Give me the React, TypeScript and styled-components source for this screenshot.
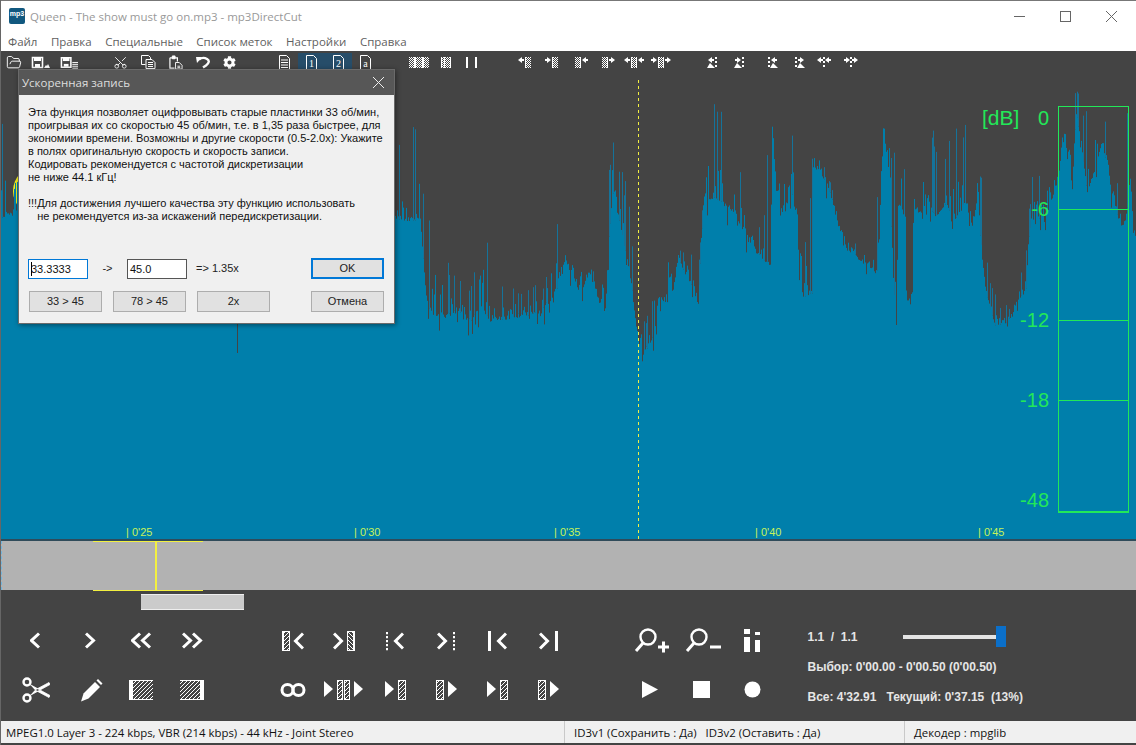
import { ReactNode } from "react";
import styled, { createGlobalStyle } from "styled-components";
import { FaCog } from "react-icons/fa";
import { FolderOpen, Scissors } from "lucide-react";

const GlobalStyle = createGlobalStyle`
  html, body { margin: 0; padding: 0; background: #444; }
  #root { width: 1136px; height: 745px; overflow: hidden; }
`;

type Pt = [number, number];

const bodyEnv: Pt[] = [
  [0, 215], [18, 205], [19, 300], [394, 300], [395, 215], [410, 216], [420, 216], [426, 295], [430, 310], [445, 313],
  [460, 308], [470, 318], [480, 305], [490, 317], [520, 313], [540, 310], [550, 297], [560, 280], [565, 257],
  [570, 270], [580, 290], [590, 270], [600, 305], [605, 308], [608, 250], [612, 190], [620, 220], [625, 250],
  [630, 270], [637, 335], [643, 350], [650, 340], [655, 325], [658, 295], [668, 298], [672, 290], [678, 255],
  [690, 280], [698, 300], [703, 205], [712, 195], [722, 200], [735, 210], [745, 235], [750, 240], [757, 250],
  [765, 260], [770, 260], [772, 140], [780, 215], [786, 205], [792, 190], [796, 215], [799, 260], [802, 295],
  [812, 290], [813, 165], [820, 165], [826, 185], [832, 195], [838, 225], [845, 247], [850, 248], [860, 258],
  [870, 265], [878, 268], [880, 210], [883, 125], [886, 150], [890, 175], [892, 275], [896, 312], [898, 200],
  [905, 215], [906, 300], [912, 290], [913, 208], [922, 208], [928, 195], [935, 215], [945, 200], [955, 215],
  [965, 200], [972, 225], [978, 190], [980, 235], [985, 285], [990, 305], [995, 325], [1003, 322], [1012, 316],
  [1016, 298], [1026, 288], [1028, 240], [1031, 215], [1040, 215], [1048, 205], [1058, 180], [1063, 125],
  [1068, 155], [1072, 185], [1076, 110], [1080, 135], [1087, 190], [1095, 165], [1102, 140], [1108, 175],
  [1115, 205], [1122, 225], [1126, 215], [1130, 170], [1133, 230], [1136, 235],
];

const peakEnv: Pt[] = [
  [0, 85], [18, 85], [19, 300], [394, 300], [395, 120], [403, 115], [417, 90], [422, 150], [426, 175], [430, 210],
  [438, 175], [443, 215], [450, 265], [470, 285], [484, 173], [490, 270], [510, 285], [530, 285], [545, 280],
  [556, 190], [562, 250], [580, 238], [590, 258], [600, 295], [604, 165], [608, 128], [613, 130], [620, 170],
  [628, 160], [631, 230], [634, 215], [640, 300], [650, 320], [655, 230], [658, 178], [668, 180], [675, 245],
  [685, 245], [698, 262], [702, 205], [705, 95], [713, 82], [722, 95], [728, 145], [740, 150], [750, 220],
  [755, 205], [762, 240], [770, 82], [777, 135], [785, 120], [793, 125], [797, 160], [805, 215], [812, 125],
  [822, 160], [830, 180], [840, 215], [855, 240], [866, 240], [880, 150], [883, 82], [886, 82], [892, 120],
  [898, 82], [905, 160], [912, 195], [925, 100], [928, 98], [935, 140], [945, 135], [955, 125], [962, 110],
  [972, 150], [980, 160], [985, 240], [990, 280], [1000, 305], [1012, 305], [1020, 270], [1026, 240], [1032, 170],
  [1040, 165], [1048, 150], [1056, 145], [1061, 100], [1068, 130], [1072, 85], [1082, 90], [1090, 85], [1098, 85],
  [1105, 120], [1112, 180], [1120, 165], [1128, 82], [1133, 210], [1136, 230],
];

const lerp = (env: Pt[], x: number) => {
  for (let i = 1; i < env.length; i++) {
    if (x <= env[i][0]) {
      const [x0, y0] = env[i - 1];
      const [x1, y1] = env[i];
      return y0 + ((y1 - y0) * (x - x0)) / (x1 - x0 || 1);
    }
  }
  return env[env.length - 1][1];
};

let seed = 7;
const rnd = () => {
  seed = (seed * 16807) % 2147483647;
  return seed / 2147483647;
};

// body columns are jagged, about one column in seven carries a thin spike up to the peak line
const buildWave = () => {
  let body = "";
  let spikes = "";
  for (let x = 0; x < 1136; x++) {
    const b = lerp(bodyEnv, x);
    const p = lerp(peakEnv, x);
    const r = rnd();
    let top = b + rnd() * 5;
    if (r < 0.3) top = b - (b - p) * rnd() * 0.35;
    if (r > 0.9) top = b + rnd() * 22;
    if (x === 237) top = 353;
    body += `M${x + 0.5} ${top.toFixed(1)}V540`;
    if (r > 0.3 && r < 0.44 && x !== 237) {
      const y = p + (b - p) * rnd() * 0.4;
      spikes += `M${x + 0.5} ${y.toFixed(1)}V${top.toFixed(1)}`;
    }
  }
  return { body, spikes };
};

const wave = buildWave();

const Window = styled.div`
  width: 1136px;
  height: 745px;
  display: flex;
  flex-direction: column;
  position: relative;
  background: #444;
  border-left: 1px solid #666;
  box-sizing: border-box;
  overflow: hidden;
`;

const TitleBar = styled.div`
  height: 31px;
  flex: none;
  background: #fff;
  display: flex;
  align-items: center;
  padding: 0 2px 0 8px;
  box-sizing: border-box;
  border-top: 1px solid #777;
  font: 11.5px "Open Sans", "Noto Sans", sans-serif;
  color: #999;
`;

const AppIcon = styled.div`
  width: 16px;
  height: 16px;
  background: #11587f;
  border-radius: 2px;
  color: #fff;
  font: 700 7px/11px "Liberation Sans", sans-serif;
  text-align: center;
  margin-right: 5px;
  overflow: hidden;
`;

const TitleText = styled.div`
  flex: 1;
`;

const WinButton = styled.div`
  width: 46px;
  height: 30px;
  display: flex;
  align-items: center;
  justify-content: center;
`;

const MenuBar = styled.div`
  height: 20px;
  flex: none;
  background: #fff;
  display: flex;
  align-items: center;
  padding-left: 7px;
  gap: 13.5px;
  font: 11.5px "Open Sans", "Noto Sans", sans-serif;
  color: #5f5f5f;
`;

const Toolbar = styled.div`
  height: 24px;
  flex: none;
  display: flex;
  align-items: flex-start;
  padding-top: 2px;
  box-sizing: border-box;
  background: #444;
`;

const ToolGroup = styled.div<{ $at: number; $gap: number }>`
  display: flex;
  align-items: center;
  height: 18px;
  margin-left: ${(p) => p.$at}px;
  gap: ${(p) => p.$gap}px;
`;

const Tool = styled.div<{ $w: number; $active?: boolean }>`
  width: ${(p) => p.$w}px;
  height: 18px;
  display: flex;
  align-items: center;
  justify-content: center;
  flex: none;
  color: #fff;
  background: ${(p) => (p.$active ? "#264d69" : "transparent")};
`;

const WaveArea = styled.div`
  height: 464px;
  flex: none;
  position: relative;
  background: #444;
  overflow: hidden;
`;

const WaveSvg = styled.svg`
  display: block;
  position: absolute;
  left: -1px;
  top: 0;
`;

const TimeMark = styled.div<{ $x: number }>`
  position: absolute;
  left: ${(p) => p.$x}px;
  bottom: 1px;
  font: 11px/12px "Liberation Sans", sans-serif;
  color: #c6f25a;
  white-space: pre;
`;

const Meter = styled.div`
  position: absolute;
  left: 1057px;
  top: 31px;
  width: 71px;
  height: 407px;
  box-sizing: border-box;
  border: 1px solid #22e858;
  border-bottom-width: 2px;
`;

const MeterLine = styled.div<{ $y: number }>`
  position: absolute;
  left: 0;
  right: 0;
  top: ${(p) => p.$y}px;
  height: 1px;
  background: #22e858;
`;

const DbLabel = styled.div<{ $y: number }>`
  position: absolute;
  right: 87px;
  top: ${(p) => p.$y}px;
  font: 20px/24px "Liberation Sans", sans-serif;
  color: #22e858;
`;

const DbUnit = styled.div`
  position: absolute;
  left: 981px;
  top: 31px;
  font: 21px/24px "Liberation Sans", sans-serif;
  color: #22e858;
`;

const Divider = styled.div`
  height: 2px;
  flex: none;
  background: #2f4b5a;
`;

const Overview = styled.div`
  height: 49px;
  flex: none;
  position: relative;
  background: #b2b2b2;
  border-left: 1px dashed #6fb4de;
`;

const Selection = styled.div`
  position: absolute;
  left: 91px;
  top: 0;
  width: 110px;
  height: 50px;
  box-sizing: border-box;
  border-top: 1px solid #f3f040;
  border-bottom: 1px solid #f3f040;
`;

const Cursor = styled.div`
  position: absolute;
  left: 153px;
  top: 0;
  width: 2px;
  height: 49px;
  background: #f3f040;
`;

const ScrollTrack = styled.div`
  height: 20px;
  flex: none;
  padding: 4px 0 0 140px;
  box-sizing: border-box;
`;

const ScrollThumb = styled.div`
  width: 103px;
  height: 16px;
  background: #cbcbcb;
  border-top: 1px solid #eee;
  border-bottom: 1px solid #eee;
  box-sizing: border-box;
`;

const Controls = styled.div`
  flex: 1;
  display: flex;
  align-items: flex-start;
`;

const IconGrid = styled.div<{ $cols: string; $left: number }>`
  display: grid;
  grid-template-columns: ${(p) => p.$cols};
  grid-auto-rows: 49px;
  margin: 6px 0 0 ${(p) => p.$left}px;
  flex: none;
`;

const Cell = styled.div`
  display: flex;
  align-items: center;
  justify-content: center;
`;

const Info = styled.div`
  margin: 17px 0 0 31px;
  display: flex;
  flex-direction: column;
  gap: 10px;
  font: 700 12px/20px "Liberation Sans", sans-serif;
  color: #e6e6e6;
  white-space: pre;
`;

const InfoRow = styled.div`
  display: flex;
  align-items: center;
`;

const Ratio = styled.div`
  width: 95px;
`;

const Slider = styled.div`
  width: 102px;
  height: 4px;
  background: #e4e4e4;
  position: relative;
`;

const Thumb = styled.div`
  position: absolute;
  left: 93px;
  top: -9px;
  width: 10px;
  height: 21px;
  background: #0b6fc9;
`;

const StatusBar = styled.div`
  height: 22px;
  flex: none;
  margin-bottom: 2px;
  background: #f0f0f0;
  display: flex;
  font: 11.4px "Open Sans", "Noto Sans", sans-serif;
  color: #111;
`;

const StatusCell = styled.div<{ $w?: number; $last?: boolean }>`
  width: ${(p) => (p.$w ? `${p.$w}px` : "auto")};
  flex: ${(p) => (p.$w ? "none" : 1)};
  padding-left: ${(p) => (p.$w === 564 ? 5 : 9)}px;
  box-sizing: border-box;
  line-height: 23px;
  border-right: ${(p) => (p.$last ? "none" : "1px solid #c9c9c9")};
  white-space: pre;
`;

const Dialog = styled.div`
  position: absolute;
  left: 17px;
  top: 69px;
  width: 377px;
  height: 255px;
  box-sizing: border-box;
  border: 1px solid #6a6a6a;
  background: #f0f0f0;
  box-shadow: 1px 1px 5px rgba(0, 0, 0, 0.45);
  display: flex;
  flex-direction: column;
`;

const DialogTitle = styled.div`
  height: 25px;
  flex: none;
  background: #575757;
  color: #dedede;
  font: 11.5px/25px "Open Sans", "Noto Sans", sans-serif;
  padding-left: 3px;
  display: flex;
  justify-content: space-between;
`;

const DialogClose = styled.div`
  width: 32px;
  display: flex;
  align-items: center;
  justify-content: center;
`;

const DialogBody = styled.div`
  flex: 1;
  display: flex;
  flex-direction: column;
  padding: 11px 9px 0 9px;
`;

const Paragraph = styled.div`
  font: 11px/13px "Liberation Sans", sans-serif;
  color: #111;
  white-space: pre;
  height: 152px;
`;

const FieldRow = styled.div`
  display: flex;
  align-items: center;
  height: 21px;
  font: 11px/13px "Liberation Sans", sans-serif;
  color: #222;
`;

const Field = styled.div<{ $focus?: boolean }>`
  width: 60px;
  height: 20px;
  box-sizing: border-box;
  background: #fff;
  border: 1px solid ${(p) => (p.$focus ? "#0078d7" : "#555")};
  font: 11px/18px "Liberation Sans", sans-serif;
  padding-left: 2px;
  color: #111;
  display: flex;
  align-items: center;
`;

const Caret = styled.span`
  width: 1px;
  height: 14px;
  background: #000;
  margin-right: -1px;
`;

const Arrow = styled.div`
  width: 39px;
  text-align: center;
`;

const Result = styled.div`
  width: 124px;
  padding-left: 9px;
  box-sizing: border-box;
`;

const ButtonRow = styled.div`
  display: flex;
  gap: 11px;
  margin-top: 12px;
  margin-left: 1px;
`;

const DlgButton = styled.div<{ $primary?: boolean; $push?: number }>`
  width: 73px;
  height: 21px;
  flex: none;
  box-sizing: border-box;
  background: #e1e1e1;
  border: ${(p) => (p.$primary ? "2px solid #0078d7" : "1px solid #adadad")};
  font: 11px/${(p) => (p.$primary ? 17 : 19)}px "Liberation Sans", sans-serif;
  color: #222;
  text-align: center;
  margin-left: ${(p) => p.$push || 0}px;
`;

const Svg = ({ w, h, children }: { w: number; h: number; children: ReactNode }) => (
  <svg width={w} height={h} viewBox={`0 0 ${w} ${h}`} fill="none" stroke="#fff">
    {children}
  </svg>
);

// --- small toolbar pieces ---
const Dith = ({ x, w, h = 11 }: { x: number; w: number; h?: number }) => (
  <rect x={x} y={0} width={w} height={h} fill="url(#dither)" stroke="none" />
);
const Bar = ({ x, w = 1, y = 0, h = 11 }: { x: number; w?: number; y?: number; h?: number }) => (
  <rect x={x} y={y} width={w} height={h} fill="#fff" stroke="none" />
);
const ArrL = ({ x, y = 3 }: { x: number; y?: number }) => (
  <path d={`M${x} ${y}l4-3v2h2v2h-2v2z`} fill="#fff" stroke="none" />
);
const ArrR = ({ x, y = 3 }: { x: number; y?: number }) => (
  <path d={`M${x + 6} ${y}l-4-3v2h-2v2h2v2z`} fill="#fff" stroke="none" />
);
const Dots = ({ x }: { x: number }) => (
  <path d={`M${x + 1} 0V11`} stroke="#fff" strokeWidth={2} strokeDasharray="2 2" />
);
const Hill = ({ x }: { x: number }) => (
  <path d={`M${x} 11l3-5 2 2 3 3z`} fill="#fff" stroke="none" />
);

const SaveDisk = () => (
  <>
    <path d="M1.5 2.5h10v10h-10z" strokeWidth={1.6} />
    <rect x={3} y={2} width={7} height={4} fill="#fff" stroke="none" />
    <rect x={4} y={9} width={5} height={3} fill="#fff" stroke="none" />
  </>
);

const DocIcon = ({ label }: { label?: string }) => (
  <Svg w={13} h={15}>
    <path d="M1.5 .5h7l3 3v11h-10z" />
    {label ? (
      <text x={6.5} y={12} textAnchor="middle" fill="#fff" stroke="none" fontFamily="Liberation Serif, serif" fontSize={10}>
        {label}
      </text>
    ) : (
      <path d="M3 5h7M3 7.5h7M3 10h7M3 12.5h7" />
    )}
  </Svg>
);

// --- big control pieces ---
const chevL = (x: number) => `M${x + 9} 1.5L${x + 1.5} 8.5L${x + 9} 15.5`;
const chevR = (x: number) => `M${x + 1} 1.5L${x + 8.5} 8.5L${x + 1} 15.5`;

const Chev = ({ d, w }: { d: string; w: number }) => (
  <Svg w={w} h={17}>
    <path d={d} strokeWidth={3} />
  </Svg>
);

const HBlock = ({ x, y, w, h }: { x: number; y: number; w: number; h: number }) => (
  <>
    <rect x={x} y={y} width={w} height={h} fill="url(#hatch)" stroke="none" />
    <rect x={x + 0.5} y={y + 0.5} width={w - 1} height={h - 1} />
  </>
);

const SelectL = ({ flip }: { flip?: boolean }) => (
  <Svg w={22} h={20}>
    <g transform={flip ? "translate(22 0) scale(-1 1)" : undefined}>
      <HBlock x={0} y={0} w={8} h={20} />
      <rect x={0} y={0} width={2} height={20} fill="#fff" stroke="none" />
      <path d="M21 2.5L13.5 10L21 17.5" strokeWidth={3} />
    </g>
  </Svg>
);

const DottedL = ({ flip }: { flip?: boolean }) => (
  <Svg w={18} h={20}>
    <g transform={flip ? "translate(18 0) scale(-1 1)" : undefined}>
      <path d="M1 1V20" strokeWidth={2} strokeDasharray="2.2 1.8" />
      <path d="M17 2.5L9.5 10L17 17.5" strokeWidth={3} />
    </g>
  </Svg>
);

const BarL = ({ flip }: { flip?: boolean }) => (
  <Svg w={19} h={20}>
    <g transform={flip ? "translate(19 0) scale(-1 1)" : undefined}>
      <rect x={0} y={0} width={3} height={20} fill="#fff" stroke="none" />
      <path d="M18 2.5L10.5 10L18 17.5" strokeWidth={3} />
    </g>
  </Svg>
);

const Tri = ({ x, h = 16 }: { x: number; h?: number }) => (
  <path d={`M${x} 1L${x + 9} ${1 + h / 2}L${x} ${1 + h}z`} fill="#fff" stroke="none" />
);

const WideBlock = ({ solid }: { solid: "left" | "right" }) => (
  <Svg w={24} h={20}>
    <rect x={0} y={0} width={24} height={20} fill="url(#hatch)" stroke="none" />
    <path d="M0 .5H24M0 19.5H24" />
    <rect x={solid === "left" ? 0 : 20} y={0} width={4} height={20} fill="#fff" stroke="none" />
  </Svg>
);

const Magnifier = ({ minus }: { minus?: boolean }) => (
  <Svg w={36} h={26}>
    <circle cx={14} cy={9} r={7.5} strokeWidth={2.4} />
    <path d="M9 15L2 23" strokeWidth={3} />
    {minus ? <path d="M25 19H36" strokeWidth={3} /> : <path d="M24 19H35M29.5 13.5V24.5" strokeWidth={3} />}
  </Svg>
);

const Ticks: [number, string][] = [
  [125, "| 0'25"],
  [353, "| 0'30"],
  [553, "| 0'35"],
  [754, "| 0'40"],
  [977, "| 0'45"],
];

const dbLabels: [number, string][] = [
  [31, "0"],
  [122, "-6"],
  [233, "-12"],
  [313, "-18"],
  [413, "-48"],
];

export default function App() {
  return (
    <>
      <GlobalStyle />
      <svg width={0} height={0} style={{ position: "absolute" }}>
        <defs>
          <pattern id="dither" width={2} height={2} patternUnits="userSpaceOnUse">
            <rect width={1} height={1} fill="#fff" />
            <rect x={1} y={1} width={1} height={1} fill="#fff" />
          </pattern>
          <pattern id="hatch" width={4} height={4} patternUnits="userSpaceOnUse">
            <path d="M-1 1L1 -1M0 4L4 0M3 5L5 3" stroke="#fff" strokeWidth={1} />
          </pattern>
        </defs>
      </svg>
      <Window>
        <TitleBar>
          <AppIcon>mp3</AppIcon>
          <TitleText>Queen - The show must go on.mp3 - mp3DirectCut</TitleText>
          <WinButton>
            <svg width={11} height={11} stroke="#666" fill="none"><path d="M0 5.5H11" /></svg>
          </WinButton>
          <WinButton>
            <svg width={11} height={11} stroke="#666" fill="none"><rect x={.5} y={.5} width={10} height={10} /></svg>
          </WinButton>
          <WinButton>
            <svg width={11} height={11} stroke="#666" fill="none"><path d="M0 0L11 11M11 0L0 11" /></svg>
          </WinButton>
        </TitleBar>
        <MenuBar>
          <span>Файл</span>
          <span>Правка</span>
          <span>Специальные</span>
          <span>Список меток</span>
          <span>Настройки</span>
          <span>Справка</span>
        </MenuBar>
        <Toolbar>
          <ToolGroup $at={5} $gap={9}>
            <Tool $w={16}><FolderOpen size={17} strokeWidth={1.4} /></Tool>
            <Tool $w={20}>
              <Svg w={20} h={14}>
                <SaveDisk />
                <path d="M13 13l2-3 1 1 1-2 2 4z" fill="#fff" stroke="none" />
              </Svg>
            </Tool>
            <Tool $w={18}>
              <Svg w={19} h={14}>
                <SaveDisk />
                <path d="M13 7.5h6M13 9.5h6M13 11.5h6M13 13.5h6" />
              </Svg>
            </Tool>
          </ToolGroup>
          <ToolGroup $at={35} $gap={13}>
            <Tool $w={15}><Scissors size={15} strokeWidth={1.4} style={{ transform: "rotate(-90deg)" }} /></Tool>
            <Tool $w={15}>
              <Svg w={15} h={14}>
                <path d="M.5 .5h7l2 2v2M.5 .5v9h4" />
                <path d="M5 4.5h6l3 3v6h-9z" />
                <path d="M7 7.5h5M7 9.5h5M7 11.5h5" />
              </Svg>
            </Tool>
            <Tool $w={14}>
              <Svg w={15} h={15}>
                <path d="M1 2.5h8v4M1 2.5v11h5" strokeWidth={1.3} />
                <path d="M3.5 .5h3v3h-3z" fill="#fff" />
                <path d="M7 7.5h4l3 3v4h-7z" />
                <path d="M9 11.5h3M9 13h3" />
              </Svg>
            </Tool>
            <Tool $w={14}>
              <Svg w={14} h={13}>
                <path d="M3 3.5Q7 .5 11 3t-1 6.5L7 11.5" strokeWidth={2.4} />
                <path d="M0 1l6 0-5 6z" fill="#fff" stroke="none" />
              </Svg>
            </Tool>
            <Tool $w={13}><FaCog size={13} /></Tool>
          </ToolGroup>
          <ToolGroup $at={35} $gap={0}>
            <Tool $w={27}><DocIcon /></Tool>
            <Tool $w={27} $active><DocIcon label="1" /></Tool>
            <Tool $w={27} $active><DocIcon label="2" /></Tool>
            <Tool $w={26}><DocIcon label="a" /></Tool>
          </ToolGroup>
          <ToolGroup $at={31} $gap={12}>
            <Svg w={20} h={11}>
              <Dith x={0} w={20} />
              <Bar x={5} w={2} />
              <Bar x={13} w={2} />
            </Svg>
            <Svg w={10} h={11}>
              <Dith x={0} w={10} />
              <Bar x={0} />
              <Bar x={9} />
              <Bar x={3} />
            </Svg>
            <Tool $w={16}>
              <Svg w={11} h={11}>
                <Bar x={0} w={2} />
                <Bar x={9} w={2} />
              </Svg>
            </Tool>
          </ToolGroup>
          <ToolGroup $at={39} $gap={14}>
            <Svg w={13} h={11}>
              <ArrL x={0} />
              <Bar x={7} />
              <Dith x={8} w={5} />
            </Svg>
            <Svg w={13} h={11}>
              <ArrR x={0} />
              <Bar x={7} />
              <Dith x={8} w={5} />
            </Svg>
          </ToolGroup>
          <ToolGroup $at={17} $gap={14}>
            <Svg w={13} h={11}>
              <Dith x={0} w={5} />
              <Bar x={5} />
              <ArrL x={7} />
            </Svg>
            <Svg w={13} h={11}>
              <Dith x={0} w={5} />
              <Bar x={5} />
              <ArrR x={7} />
            </Svg>
          </ToolGroup>
          <ToolGroup $at={9} $gap={7}>
            <Svg w={20} h={11}>
              <ArrL x={0} />
              <Bar x={7} />
              <Dith x={8} w={4} />
              <Bar x={12} />
              <ArrL x={14} />
            </Svg>
            <Svg w={20} h={11}>
              <ArrR x={0} />
              <Bar x={7} />
              <Dith x={8} w={4} />
              <Bar x={12} />
              <ArrR x={14} />
            </Svg>
          </ToolGroup>
          <ToolGroup $at={36} $gap={17}>
            <Svg w={10} h={11}>
              <ArrL x={1} />
              <Dots x={8} />
              <Hill x={0} />
            </Svg>
            <Svg w={10} h={11}>
              <ArrR x={1} />
              <Dots x={8} />
              <Hill x={0} />
            </Svg>
          </ToolGroup>
          <ToolGroup $at={24} $gap={17}>
            <Svg w={10} h={11}>
              <Dots x={0} />
              <ArrL x={3} />
              <Hill x={2} />
            </Svg>
            <Svg w={10} h={11}>
              <Dots x={0} />
              <ArrR x={3} />
              <Hill x={2} />
            </Svg>
          </ToolGroup>
          <ToolGroup $at={12} $gap={13}>
            <Svg w={14} h={11}>
              <ArrL x={0} />
              <Dots x={6} />
              <ArrL x={8} />
            </Svg>
            <Svg w={14} h={11}>
              <ArrR x={0} />
              <Dots x={6} />
              <ArrR x={8} />
            </Svg>
          </ToolGroup>
        </Toolbar>
        <WaveArea>
          <WaveSvg width={1136} height={464} viewBox="0 75 1136 464">
            <circle cx={38} cy={191} r={25} fill="#f4f01e" />
            <path d={wave.spikes} stroke="#15739a" strokeWidth={1} />
            <path d={wave.body} stroke="#007fab" strokeWidth={1} />
            <path d="M638.5 80V540" stroke="#f3f040" strokeWidth={1} strokeDasharray="3 3" />
          </WaveSvg>
          {Ticks.map(([x, t]) => (
            <TimeMark key={t} $x={x}>{t}</TimeMark>
          ))}
          <DbUnit>[dB]</DbUnit>
          {dbLabels.map(([y, t]) => (
            <DbLabel key={t} $y={y}>{t}</DbLabel>
          ))}
          <Meter>
            <MeterLine $y={102} />
            <MeterLine $y={213} />
            <MeterLine $y={293} />
          </Meter>
        </WaveArea>
        <Divider />
        <Overview>
          <Selection />
          <Cursor />
        </Overview>
        <ScrollTrack>
          <ScrollThumb />
        </ScrollTrack>
        <Controls>
          <IconGrid $cols="54px 56px 44px 58px" $left={8}>
            <Cell><Chev w={12} d={chevL(0)} /></Cell>
            <Cell><Chev w={12} d={chevR(0)} /></Cell>
            <Cell><Chev w={21} d={`${chevL(0)}${chevL(10)}`} /></Cell>
            <Cell><Chev w={21} d={`${chevR(0)}${chevR(10)}`} /></Cell>
            <Cell>
              <Svg w={28} h={26}>
                <circle cx={5} cy={5} r={3.5} strokeWidth={2.4} />
                <circle cx={5} cy={21} r={3.5} strokeWidth={2.4} />
                <path d="M8 7.5L28 18.5L27 20.5L13 13M8 18.5L28 7.5L27 5.5L13 13" fill="#fff" strokeWidth={0.8} />
              </Svg>
            </Cell>
            <Cell>
              <Svg w={23} h={24}>
                <path d="M1 23.5L3.5 15.5L15 4L20 9L8.5 20.5Z" fill="#fff" stroke="none" />
                <path d="M16.5 2.5L18 1L22.5 5.5L21 7Z" fill="#fff" stroke="none" />
              </Svg>
            </Cell>
            <Cell><WideBlock solid="left" /></Cell>
            <Cell><WideBlock solid="right" /></Cell>
          </IconGrid>
          <IconGrid $cols="repeat(6, 51px)" $left={46.5}>
            <Cell><SelectL /></Cell>
            <Cell><SelectL flip /></Cell>
            <Cell><DottedL /></Cell>
            <Cell><DottedL flip /></Cell>
            <Cell><BarL /></Cell>
            <Cell><BarL flip /></Cell>
            <Cell>
              <Svg w={26} h={16}>
                <circle cx={7.5} cy={8} r={5.5} strokeWidth={3} />
                <circle cx={18.5} cy={8} r={5.5} strokeWidth={3} />
              </Svg>
            </Cell>
            <Cell>
              <Svg w={40} h={20}>
                <Tri x={0} h={16} />
                <HBlock x={13} y={0} w={6} h={20} />
                <HBlock x={20} y={0} w={6} h={20} />
                <Tri x={30} h={16} />
              </Svg>
            </Cell>
            <Cell>
              <Svg w={21} h={20}>
                <Tri x={0} h={16} />
                <HBlock x={13} y={0} w={8} h={20} />
              </Svg>
            </Cell>
            <Cell>
              <Svg w={21} h={20}>
                <HBlock x={0} y={0} w={8} h={20} />
                <Tri x={12} h={16} />
              </Svg>
            </Cell>
            <Cell>
              <Svg w={21} h={20}>
                <Tri x={0} h={16} />
                <HBlock x={13} y={0} w={8} h={20} />
              </Svg>
            </Cell>
            <Cell>
              <Svg w={21} h={20}>
                <HBlock x={0} y={0} w={8} h={20} />
                <Tri x={12} h={16} />
              </Svg>
            </Cell>
          </IconGrid>
          <IconGrid $cols="51px 51px 48px" $left={53}>
            <Cell><Magnifier /></Cell>
            <Cell><Magnifier minus /></Cell>
            <Cell>
              <Svg w={17} h={24}>
                <rect x={0} y={0} width={6} height={5} fill="#fff" stroke="none" />
                <rect x={0} y={8} width={6} height={15} fill="#fff" stroke="none" />
                <rect x={11} y={3} width={5} height={3} fill="#fff" stroke="none" />
                <rect x={11} y={11} width={5} height={12} fill="#fff" stroke="none" />
              </Svg>
            </Cell>
            <Cell>
              <Svg w={20} h={18}>
                <path d="M0 0L16 8.5L0 17z" fill="#fff" stroke="none" />
              </Svg>
            </Cell>
            <Cell>
              <Svg w={21} h={17}>
                <rect x={0} y={0} width={17} height={17} fill="#fff" stroke="none" />
              </Svg>
            </Cell>
            <Cell>
              <Svg w={17} h={17}>
                <circle cx={8.5} cy={8.5} r={8} fill="#fff" stroke="none" />
              </Svg>
            </Cell>
          </IconGrid>
          <Info>
            <InfoRow>
              <Ratio>1.1  /  1.1</Ratio>
              <Slider><Thumb /></Slider>
            </InfoRow>
            <InfoRow>Выбор: 0'00.00 - 0'00.50 (0'00.50)</InfoRow>
            <InfoRow>Все: 4'32.91   Текущий: 0'37.15  (13%)</InfoRow>
          </Info>
        </Controls>
        <StatusBar>
          <StatusCell $w={564}>MPEG1.0 Layer 3 - 224 kbps, VBR (214 kbps) - 44 kHz - Joint Stereo</StatusCell>
          <StatusCell $w={340}>ID3v1 (Сохранить : Да)   ID3v2 (Оставить : Да)</StatusCell>
          <StatusCell $last>Декодер : mpglib</StatusCell>
        </StatusBar>
        <Dialog>
          <DialogTitle>
            Ускоренная запись
            <DialogClose>
              <svg width={11} height={11} stroke="#eee" fill="none"><path d="M0 0L11 11M11 0L0 11" /></svg>
            </DialogClose>
          </DialogTitle>
          <DialogBody>
            <Paragraph>
              {`Эта функция позволяет оцифровывать старые пластинки 33 об/мин,
проигрывая их со скоростью 45 об/мин, т.е. в 1,35 раза быстрее, для
экономиии времени. Возможны и другие скорости (0.5-2.0x): Укажите
в полях оригинальную скорость и скорость записи.
Кодировать рекомендуется с частотой дискретизации
не ниже 44.1 кГц!

!!!Для достижения лучшего качества эту функцию использовать
   не рекомендуется из-за искажений передискретизации.`}
            </Paragraph>
            <FieldRow>
              <Field $focus><Caret />33.3333</Field>
              <Arrow>-&gt;</Arrow>
              <Field>45.0</Field>
              <Result>=&gt; 1.35x</Result>
              <DlgButton $primary>OK</DlgButton>
            </FieldRow>
            <ButtonRow>
              <DlgButton>33 &gt; 45</DlgButton>
              <DlgButton>78 &gt; 45</DlgButton>
              <DlgButton>2x</DlgButton>
              <DlgButton $push={30}>Отмена</DlgButton>
            </ButtonRow>
          </DialogBody>
        </Dialog>
      </Window>
    </>
  );
}
